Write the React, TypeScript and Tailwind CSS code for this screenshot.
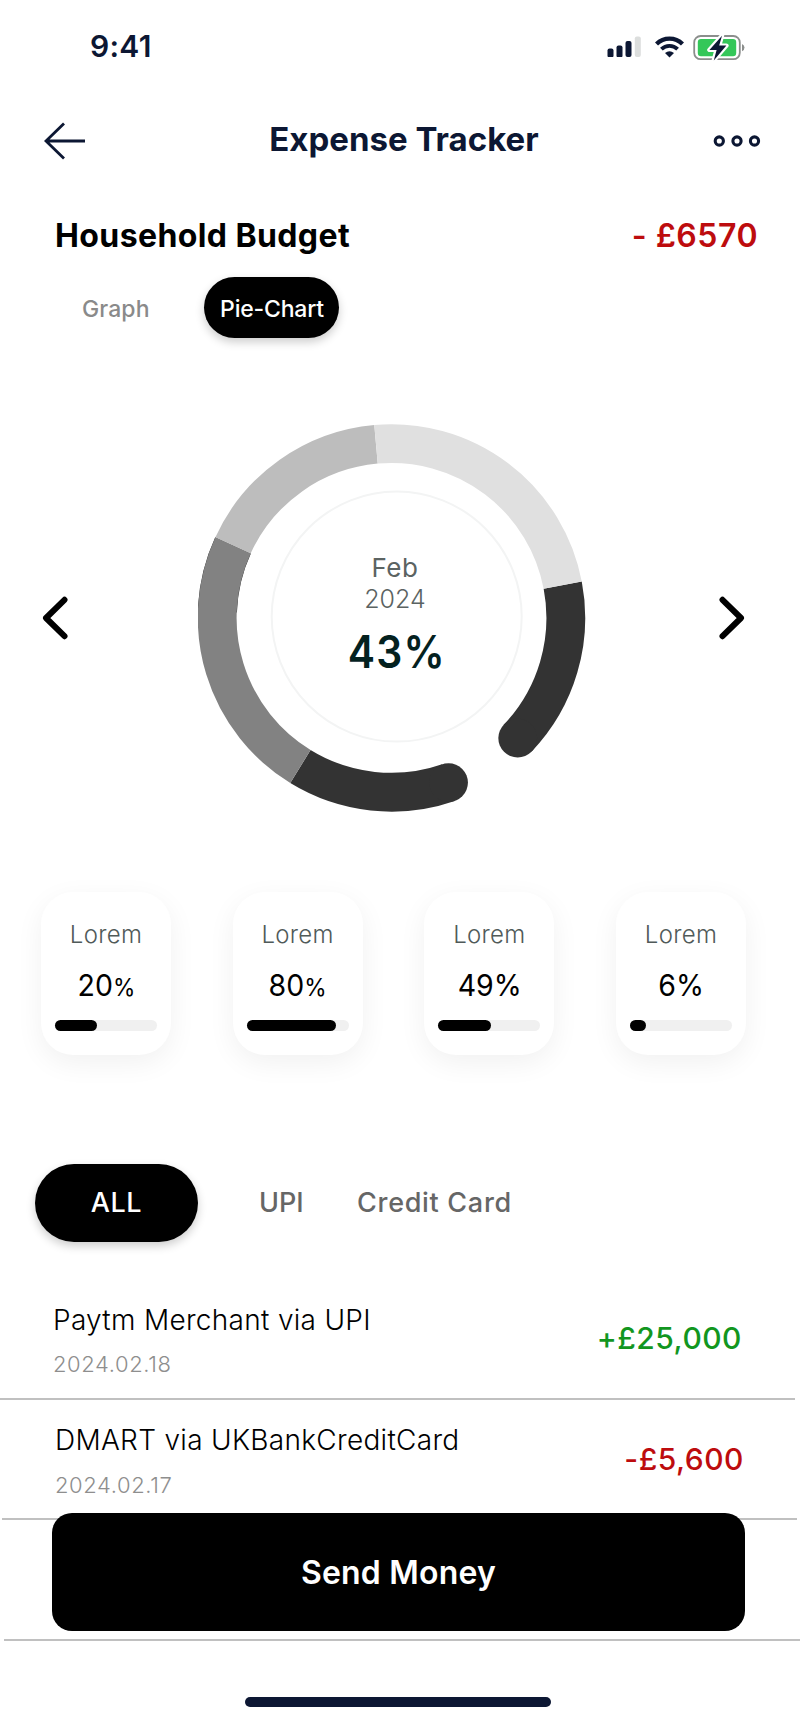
import clsx from "clsx";

const segments = [
  { from: 133.6, to: 79.2, color: "#333333", rounded: true },
  { from: 160.9, to: 211.5, color: "#333333", rounded: true },
  { from: 211.5, to: 294.6, color: "#828282", rounded: false },
  { from: 294.6, to: 354.9, color: "#bdbdbd", rounded: false },
  { from: -5.1, to: 79.2, color: "#e0e0e0", rounded: false },
];

const categories = [
  { name: "Lorem", value: "20", small: true, width: 42 },
  { name: "Lorem", value: "80", small: true, width: 89 },
  { name: "Lorem", value: "49", small: false, width: 53 },
  { name: "Lorem", value: "6", small: false, width: 16 },
];

const CX = 193.5;
const CY = 193.9;
const R = 174.3;

function point(deg: number) {
  const a = ((deg - 90) * Math.PI) / 180;
  return [CX + R * Math.cos(a), CY + R * Math.sin(a)];
}

function arc(from: number, to: number) {
  const [x1, y1] = point(from);
  const [x2, y2] = point(to);
  return `M${x1} ${y1}A${R} ${R} 0 0 ${to > from ? 1 : 0} ${x2} ${y2}`;
}

function StatusBar() {
  return (
    <div className="flex h-[92px] items-center pr-[55px] pl-[90px] text-[#0c1733]">
      <span className="flex-1 text-[30px] font-semibold tracking-[0.3px]">9:41</span>
      <svg width="35" height="22" viewBox="0 0 35 22" className="mr-[13px]" fill="currentColor">
        <rect x="0.5" y="13.5" width="6" height="9" rx="2" />
        <rect x="9.5" y="10.5" width="6" height="12" rx="2" />
        <rect x="18.5" y="6" width="6" height="16" rx="2" />
        <rect x="27.8" y="1.5" width="6" height="20.5" rx="2" fill="#dcdedd" />
      </svg>
      <svg width="29" height="22" viewBox="0 0 29 22" className="mt-px mr-[9px]" fill="none" stroke="currentColor">
        <path d="M1.5 8A18.5 18.5 0 0 1 27.5 8" strokeWidth="4.4" />
        <path d="M6.4 13.2A11.5 11.5 0 0 1 22.6 13.2" strokeWidth="3.8" />
        <path d="M10 17Q14.5 13.4 19 17L14.5 21.6Z" fill="currentColor" stroke="none" />
      </svg>
      <svg width="52" height="30" viewBox="0 0 52 30" className="mt-px">
        <rect x="1.2" y="4" width="45.6" height="23.2" rx="6.5" fill="none" stroke="#8b8e8c" strokeWidth="1.8" />
        <rect x="4.8" y="6.9" width="38.4" height="17.4" rx="3.2" fill="#34c759" />
        <path d="M49 11.9a4 4 0 0 1 0 7.4z" fill="#8b8e8c" />
        <path
          d="M29 3.7L16.4 17.9h7.2L20.8 28.4 33.4 13.6h-7.2z"
          fill="#0c1733"
          stroke="#fff"
          strokeWidth="4.4"
          strokeLinejoin="round"
          paintOrder="stroke"
        />
      </svg>
    </div>
  );
}

function Header() {
  return (
    <header className="flex h-[95px] items-center justify-between pr-[39px] pl-[44px] text-[#0c1733]">
      <svg width="42" height="38" viewBox="0 0 42 38" className="mt-[2px]" fill="none" stroke="currentColor" strokeWidth="2.8">
        <path d="M41 19H2M20 1.5L2 19l18 17.5" />
      </svg>
      <h1 className="ml-[9px] text-[33px] font-bold">Expense Tracker</h1>
      <svg width="48" height="12" viewBox="0 0 48 12" className="mt-[2px]" fill="none" stroke="currentColor" strokeWidth="3.1">
        <circle cx="6.3" cy="6" r="4.1" />
        <circle cx="24" cy="6" r="4.1" />
        <circle cx="41.5" cy="6" r="4.1" />
      </svg>
    </header>
  );
}

function Donut() {
  return (
    <div className="relative h-[388px] w-[388px]">
      <svg width="388" height="388" viewBox="0 0 388 388" fill="none">
        <path d={arc(272, 294.6)} stroke="#333333" strokeWidth="39.2" />
        {segments.map((s, i) => (
          <path key={i} d={arc(s.from, s.to)} stroke={s.color} strokeWidth="38.8" />
        ))}
        {segments
          .filter((s) => s.rounded)
          .map((s) => {
            const [x, y] = point(s.from);
            return <circle key={s.from} cx={x} cy={y} r="19.4" fill={s.color} />;
          })}
        <circle cx="198.7" cy="192.6" r="125" stroke="#f3f4f4" strokeWidth="2" />
      </svg>
      <div className="absolute inset-0 flex flex-col items-center pt-[128px] pl-[6px] text-[#5b6362]">
        <span className="text-[26px] leading-[31px] tracking-[0.5px]">Feb</span>
        <span className="mt-px text-[25px] leading-[31px] font-light">2024</span>
        <span className="mt-[12px] ml-[3px] scale-x-[0.91] text-[45px] leading-[50px] font-semibold tracking-[1.3px] text-[#04211f]">
          43%
        </span>
      </div>
    </div>
  );
}

function Chevron({ flip }: { flip?: boolean }) {
  return (
    <svg
      width="26"
      height="44"
      viewBox="0 0 26 44"
      className={clsx("shrink-0", flip && "-scale-x-100")}
      fill="none"
      stroke="#000"
      strokeWidth="6"
      strokeLinecap="round"
      strokeLinejoin="round"
    >
      <path d="M22.5 3.8L4 22l18.5 18.2" />
    </svg>
  );
}

function CategoryCard({ item }: { item: (typeof categories)[number] }) {
  return (
    <div className="flex h-[163px] w-[130px] flex-col items-center rounded-[32px] bg-white pt-[28px] shadow-[0_8px_28px_rgba(0,0,0,0.06)]">
      <span className="text-[24px] leading-[30px] font-light tracking-[0.3px] text-[#505a59]">{item.name}</span>
      <span className="mt-[17px] h-9 text-[30px] leading-9 text-black">
        <span className="inline-block scale-x-[0.95]">
          {item.value}
          <span className={clsx(item.small && "text-[24px]")}>%</span>
        </span>
      </span>
      <div className="mt-[17px] h-[11px] w-[102px] rounded-full bg-[#f0f0f0]">
        <div className="h-full rounded-full bg-black" style={{ width: item.width }} />
      </div>
    </div>
  );
}

type RowProps = {
  title: string;
  date: string;
  amount: string;
  className: string;
  amountClass: string;
};

function TransactionRow({ title, date, amount, className, amountClass }: RowProps) {
  return (
    <div className={clsx("flex h-[120.5px] w-[795px] justify-between border-b-2 border-[#c0c0c0]", className)}>
      <div className="pt-[23.5px]">
        <p className="text-[28px] leading-[34px] font-light tracking-[0.3px] text-black">{title}</p>
        <p className="mt-[13.5px] text-[22px] leading-[28px] font-light tracking-[0.6px] text-[#8e8e8e]">{date}</p>
      </div>
      <p className={clsx("pt-[41px] text-[30px] leading-[36px] font-medium tracking-[0.5px]", amountClass)}>{amount}</p>
    </div>
  );
}

export default function App() {
  return (
    <div className="relative h-[1723px] w-[800px] overflow-hidden bg-white font-['Inter',sans-serif]">
      <StatusBar />
      <Header />

      <div className="flex justify-between pt-[29px] pr-[42px] pl-[55px] text-[32px] leading-10">
        <h2 className="font-bold tracking-[0.4px] text-black">Household Budget</h2>
        <span className="font-semibold tracking-[0.5px] text-[#bd0c0e]">- £6570</span>
      </div>

      <div className="mt-[21px] flex h-[61px] items-center pl-[82px] text-[23px] font-medium">
        <span className="w-[122px] pt-[3px] tracking-[0.1px] text-[#8a8a8a]">Graph</span>
        <span className="flex h-full w-[135px] items-center justify-center rounded-full bg-black pt-[3px] pl-px tracking-[-0.2px] text-white shadow-[0_4px_10px_rgba(0,0,0,0.2)]">
          Pie-Chart
        </span>
      </div>

      <div className="mt-[86px] flex items-center pr-[55px] pl-[42px]">
        <Chevron />
        <div className="ml-[130px] flex-1">
          <Donut />
        </div>
        <Chevron flip />
      </div>

      <div className="mt-[80px] flex justify-between pr-[54px] pl-[41px]">
        {categories.map((c, i) => (
          <CategoryCard key={i} item={c} />
        ))}
      </div>

      <div className="mt-[109px] flex h-[78px] items-center pl-[35px] text-[27px] font-medium text-[#666]">
        <span className="flex h-full w-[163px] items-center justify-center rounded-full bg-black tracking-[0.6px] text-white shadow-[0_4px_10px_rgba(0,0,0,0.2)]">
          ALL
        </span>
        <span className="ml-[61px] w-[98px]">UPI</span>
        <span className="tracking-[0.7px]">Credit Card</span>
      </div>

      <div className="mt-[37px]">
        <TransactionRow
          title="Paytm Merchant via UPI"
          date="2024.02.18"
          amount="+£25,000"
          className="pr-[53px] pl-[53px]"
          amountClass="text-[#12961f]"
        />
        <TransactionRow
          title="DMART via UKBankCreditCard"
          date="2024.02.17"
          amount="-£5,600"
          className="ml-[2px] pr-[53px] pl-[53px]"
          amountClass="text-[#bd0c0e]"
        />
        <div className="ml-[4px] h-[120.5px] border-b-2 border-[#c0c0c0]" />
      </div>

      <button className="absolute top-[1513px] left-[52px] h-[118px] w-[693px] rounded-[20px] bg-black pt-[2px] text-[32px] font-semibold tracking-[0.2px] text-white">
        Send Money
      </button>

      <div className="mt-[56px] ml-[244.5px] h-[10px] w-[306px] rounded-full bg-[#0c1733]" />
    </div>
  );
}
